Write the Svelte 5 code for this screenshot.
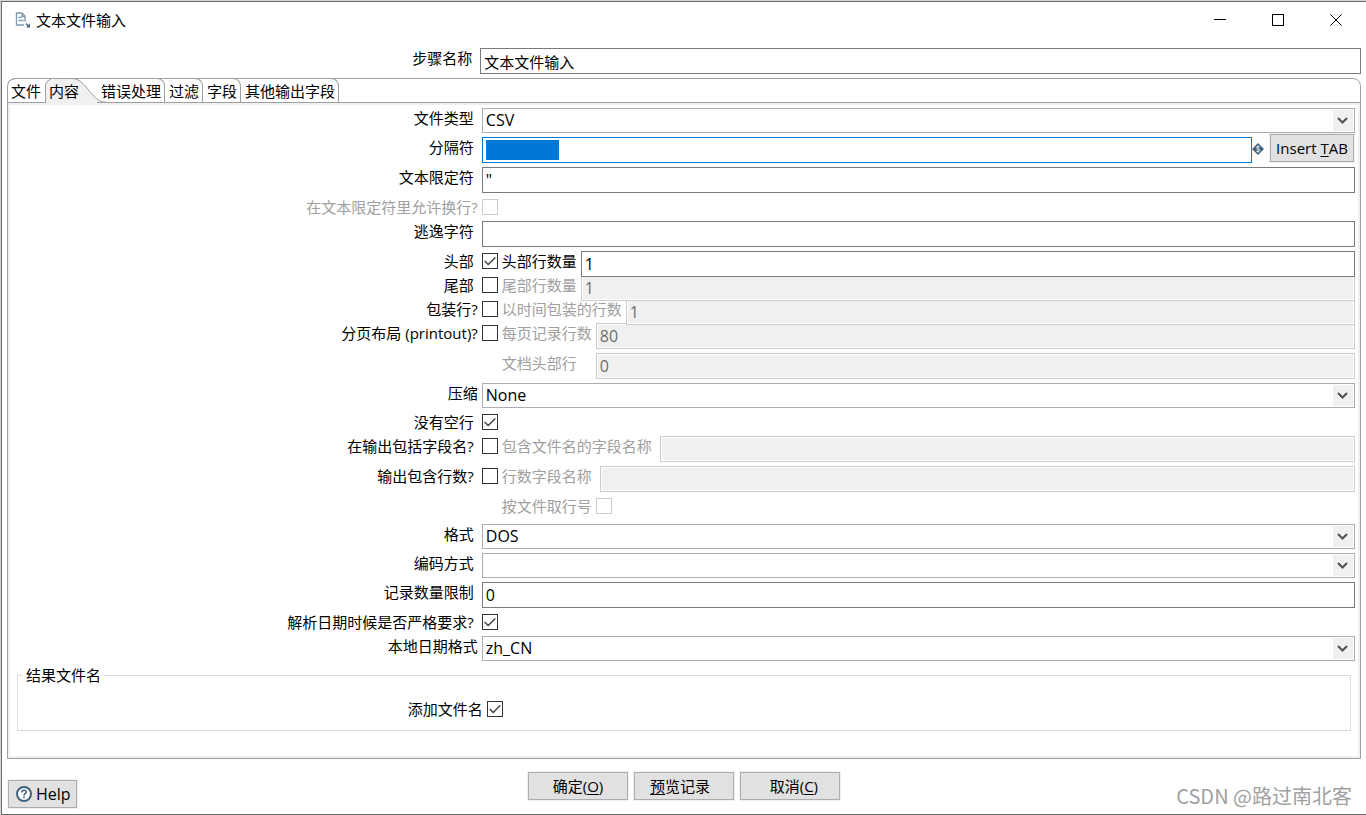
<script lang="ts">
    interface Sub {
        label: string;
        kind: "text" | "check";
        value?: string;
        enabled?: boolean;
        wide?: boolean;
        spaced?: boolean;
    }

    interface Row {
        id: string;
        label?: string;
        near?: boolean;
        kind: "select" | "text" | "check" | "separator" | "none";
        value?: string;
        checked?: boolean;
        disabled?: boolean;
        tight?: boolean;
        after?: boolean;
        sub?: Sub;
    }

    const tabs = ["文件", "内容", "错误处理", "过滤", "字段", "其他输出字段"];
    let activeTab = $state(1);

    let stepName = $state("文本文件输入");
    let addResult = $state(true);

    let rows: Row[] = $state([
        { id: "filetype", label: "文件类型", kind: "select", value: "CSV" },
        { id: "separator", label: "分隔符", kind: "separator", value: "" },
        { id: "enclosure", label: "文本限定符", kind: "text", value: '"' },
        {
            id: "breaks",
            label: "在文本限定符里允许换行?",
            near: true,
            kind: "check",
            checked: false,
            disabled: true,
        },
        { id: "escape", label: "逃逸字符", kind: "text", value: "" },
        {
            id: "header",
            label: "头部",
            kind: "check",
            checked: true,
            tight: true,
            sub: { label: "头部行数量", kind: "text", value: "1", enabled: true },
        },
        {
            id: "footer",
            label: "尾部",
            kind: "check",
            checked: false,
            tight: true,
            sub: { label: "尾部行数量", kind: "text", value: "1" },
        },
        {
            id: "wrapped",
            label: "包装行?",
            near: true,
            kind: "check",
            checked: false,
            tight: true,
            sub: { label: "以时间包装的行数", kind: "text", value: "1" },
        },
        {
            id: "paged",
            label: "分页布局 (printout)?",
            near: true,
            kind: "check",
            checked: false,
            sub: { label: "每页记录行数", kind: "text", value: "80" },
        },
        {
            id: "docheader",
            kind: "none",
            sub: { label: "文档头部行", kind: "text", value: "0", wide: true },
        },
        {
            id: "compression",
            label: "压缩",
            near: true,
            kind: "select",
            value: "None",
        },
        { id: "noempty", label: "没有空行", kind: "check", checked: true },
        {
            id: "inclfile",
            label: "在输出包括字段名?",
            kind: "check",
            checked: false,
            sub: {
                label: "包含文件名的字段名称",
                kind: "text",
                value: "",
                spaced: true,
            },
        },
        {
            id: "inclrow",
            label: "输出包含行数?",
            kind: "check",
            checked: false,
            sub: {
                label: "行数字段名称",
                kind: "text",
                value: "",
                spaced: true,
            },
        },
        {
            id: "rowbyfile",
            kind: "none",
            after: true,
            sub: { label: "按文件取行号", kind: "check" },
        },
        { id: "format", label: "格式", kind: "select", value: "DOS" },
        { id: "encoding", label: "编码方式", kind: "select", value: "" },
        { id: "limit", label: "记录数量限制", kind: "text", value: "0" },
        {
            id: "lenient",
            label: "解析日期时候是否严格要求?",
            kind: "check",
            checked: true,
        },
        {
            id: "locale",
            label: "本地日期格式",
            near: true,
            kind: "select",
            value: "zh_CN",
        },
    ]);
</script>

<div class="window">
    <header class="titlebar">
        <svg class="doc-icon" width="16" height="16" viewBox="0 0 16 16">
            <path
                d="M10 9.500V4L7 1H1.500v12H9M7 1v3.500h3M3.500 5.500h3M3.500 8.500h5"
                fill="none"
                stroke="#7f9db3"
                stroke-width="1.400"
            />
            <path d="M11 11.500l2 2" stroke="#3d6480" stroke-width="1.400" />
            <path d="M15 11.500V15.500H11z" fill="#3d6480" />
        </svg>
        <h1>{stepName}</h1>
        <button class="win-btn" aria-label="最小化">
            <svg width="12" height="12" viewBox="0 0 12 12">
                <path d="M0 5.500h12" stroke="#000" />
            </svg>
        </button>
        <button class="win-btn" aria-label="最大化">
            <svg width="12" height="12" viewBox="0 0 12 12">
                <rect x=".5" y=".5" width="11" height="11" fill="none" stroke="#000" />
            </svg>
        </button>
        <button class="win-btn" aria-label="关闭">
            <svg width="12" height="12" viewBox="0 0 12 12">
                <path d="M.3.3l11.400 11.400M11.700.3L.3 11.700" stroke="#000" />
            </svg>
        </button>
    </header>

    <div class="row step">
        <label class="label" for="step">步骤名称</label>
        <input class="text" id="step" type="text" bind:value={stepName} />
    </div>

    <main class="panel">
        <div class="tabs" role="tablist">
            {#each tabs as tab, i (tab)}
                <button
                    class="tab"
                    class:active={i === activeTab}
                    class:before={i === activeTab - 1}
                    role="tab"
                    aria-selected={i === activeTab}
                    onclick={() => (activeTab = i)}
                >
                    {#if i === activeTab}
                        <svg class="tab-shape" width="66" height="26" viewBox="0 0 66 26">
                            <path
                                d="M.5 26V7L2 3.500L6.500.5H26C37 .5 40 9 48 17C52 21.500 56 24.500 63 24.500V26Z"
                                fill="#f0f0f0"
                            />
                            <path
                                d="M.5 25V7L2 3.500L6.500.5H26C37 .5 40 9 48 17C52 21.500 56 24.500 63 24.500H66"
                                fill="none"
                                stroke="#a0a0a0"
                            />
                        </svg>
                    {/if}
                    <span>{tab}</span>
                </button>
            {/each}
            <div class="tab-rest"></div>
        </div>

        <div class="page">
            <form class="form">
                {#each rows as row, i (row.id)}
                    <div
                        class="row"
                        class:tight={row.tight}
                        class:after={row.after}
                        style:z-index={rows.length - i}
                    >
                        <label
                            class="label"
                            class:near={row.near}
                            class:off={row.disabled}
                            for={row.id}>{row.label ?? ""}</label
                        >
                        <div class="field">
                            {#if row.kind === "select"}
                                <div class="combo">
                                    <select id={row.id} bind:value={row.value}>
                                        <option value={row.value}>{row.value}</option>
                                    </select>
                                    <svg width="20" height="21" viewBox="0 0 20 21">
                                        <rect width="20" height="21" fill="#f0f0f0" />
                                        <path
                                            d="M5 8l4.500 4.500L14 8"
                                            fill="none"
                                            stroke="#505050"
                                            stroke-width="2"
                                        />
                                    </svg>
                                </div>
                            {:else if row.kind === "text"}
                                <input
                                    class="text"
                                    id={row.id}
                                    type="text"
                                    bind:value={row.value}
                                />
                            {:else if row.kind === "separator"}
                                <input
                                    class="text selected"
                                    id={row.id}
                                    type="text"
                                    bind:value={row.value}
                                />
                                <svg class="variable" width="12" height="12" viewBox="0 0 12 12">
                                    <path d="M6 0l6 6-6 6-6-6z" fill="#40627c" />
                                    <path
                                        d="M8 4.200C7.500 3.200 4.300 3 4.300 4.600C4.300 6.300 7.800 5.500 7.800 7.400C7.800 9 4.500 8.800 4 7.700M6 2.300v7.400"
                                        fill="none"
                                        stroke="#dce6ed"
                                    />
                                </svg>
                                <button type="button" class="btn insert">Insert <u>T</u>AB</button>
                            {:else if row.kind === "check"}
                                <input
                                    class="check"
                                    id={row.id}
                                    type="checkbox"
                                    disabled={row.disabled}
                                    bind:checked={row.checked}
                                />
                            {:else}
                                <span class="blank"></span>
                            {/if}

                            {#if row.sub}
                                <label
                                    class="sub"
                                    class:off={!row.sub.enabled}
                                    class:wide={row.sub.wide}
                                    class:spaced={row.sub.spaced}
                                    for="{row.id}-sub">{row.sub.label}</label
                                >
                                <input
                                    class={row.sub.kind}
                                    id="{row.id}-sub"
                                    type={row.sub.kind === "check" ? "checkbox" : "text"}
                                    value={row.sub.value}
                                    disabled={!row.sub.enabled}
                                />
                            {/if}
                        </div>
                    </div>
                {/each}
            </form>

            <fieldset>
                <legend>结果文件名</legend>
                <div class="row">
                    <label class="label near" for="result">添加文件名</label>
                    <input class="check" id="result" type="checkbox" bind:checked={addResult} />
                </div>
            </fieldset>
        </div>
    </main>

    <footer class="footer">
        <button class="btn help">
            <svg width="16" height="16" viewBox="0 0 16 16">
                <circle cx="8" cy="8" r="7" fill="#fff" stroke="#40627c" stroke-width="2" />
                <path
                    d="M5.800 6.500C5.800 3.500 10.300 3.600 10.200 6.200C10.100 7.700 8 7.700 8 9.500M8 10.500v1.700"
                    fill="none"
                    stroke="#40627c"
                    stroke-width="1.600"
                />
            </svg>
            Help
        </button>
        <div class="buttons">
            <button class="btn">确定(<u>O</u>)</button>
            <button class="btn"><u>预</u>览记录&nbsp;&nbsp;</button>
            <button class="btn">&nbsp;&nbsp;取消(<u>C</u>)</button>
        </div>
        <span class="watermark">CSDN @路过南北客</span>
    </footer>
</div>

<style>
    :global(body) {
        background: #d4d4d4;
    }

    .window {
        box-sizing: border-box;
        min-height: calc(100vh - 1px);
        margin-left: 1px;
        border: 1px solid #6b6b6b;
        border-right: 0;
        background: #fff;
        display: flex;
        flex-direction: column;
        font-family: "Open Sans", "Noto Sans CJK SC", sans-serif;
        font-size: 15px;
        line-height: 20px;
        color: #000;
    }

    :global(body):has(.window) {
        padding-top: 1px;
    }

    .window * {
        box-sizing: border-box;
    }

    button,
    input,
    select {
        font: inherit;
        color: inherit;
        margin: 0;
    }

    .titlebar {
        display: flex;
        align-items: center;
        height: 36px;
        padding: 0 1px 0 13px;
    }

    h1 {
        flex: 1;
        margin: 0 0 0 5px;
        font-size: 15px;
        font-weight: 400;
    }

    .win-btn {
        width: 58px;
        height: 36px;
        padding: 0;
        border: 0;
        background: none;
        display: grid;
        place-items: center;
    }

    .row {
        display: flex;
        align-items: flex-start;
    }

    .step {
        margin: 10px 5px 4px 4px;
    }

    .label {
        flex: none;
        width: 35%;
        padding-right: 8px;
        text-align: right;
        white-space: nowrap;
    }

    .near {
        padding-right: 4px;
    }

    .off {
        color: #a0a0a0;
    }

    .text {
        flex: 1;
        min-width: 0;
        height: 26px;
        padding: 0 3px;
        border: 1px solid #7a7a7a;
        border-radius: 0;
        background: #fff;
        outline: 0;
    }

    .text:disabled {
        border-color: #ccc;
        background: #f0f0f0;
        box-shadow: inset 0 0 0 1px #fff;
        color: #6d6d6d;
    }

    .selected {
        border-color: #0078d7;
        background: linear-gradient(#0078d7, #0078d7) no-repeat 3px 2px / 73px 20px;
    }

    .panel {
        flex: 1;
        display: flex;
        flex-direction: column;
        margin: 0 5px;
        border: 1px solid #a0a0a0;
        border-radius: 8px 8px 0 0;
    }

    .tabs {
        display: flex;
        height: 24px;
        margin-top: -1px;
    }

    .tab {
        position: relative;
        height: 25px;
        padding: 0 3px 0 4px;
        border: 1px solid #a0a0a0;
        border-left: 0;
        border-radius: 0 8px 0 0;
        background: none;
        line-height: 22px;
        white-space: nowrap;
    }

    .tab.before {
        border-right: 0;
        border-radius: 8px 0 0 0;
        padding: 0 4px 0 3px;
    }

    .tab.active {
        border: 0;
        padding: 1px 18px 1px 4px;
    }

    .tab span {
        position: relative;
    }

    .tab-shape {
        position: absolute;
        left: 0;
        top: 0;
    }

    .tab-rest {
        flex: 1;
        height: 25px;
        border-bottom: 1px solid #a0a0a0;
    }

    .page {
        flex: 1;
        margin-top: 1px;
        border: 2px solid #f0f0f0;
    }

    .form {
        display: flex;
        flex-direction: column;
        gap: 4px;
        padding-top: 3px;
    }

    .tight {
        height: 24px;
        margin-bottom: -4px;
    }

    .after {
        margin-bottom: 4px;
    }

    .field {
        flex: 1;
        min-width: 0;
        display: flex;
        align-items: flex-start;
        padding-right: 3px;
    }

    .form .label {
        height: 20px;
    }

    .form .text,
    .form select,
    .help {
        font-size: 16px;
    }

    .combo {
        flex: 1;
        display: grid;
    }

    .combo > * {
        grid-area: 1 / 1;
    }

    .combo select {
        appearance: none;
        width: 100%;
        height: 25px;
        padding: 0 24px 1px 3px;
        border: 1px solid #acacb4;
        border-radius: 0;
        background: #fff;
        outline: 0;
    }

    .combo svg {
        justify-self: end;
        align-self: center;
        margin-right: 2px;
        pointer-events: none;
    }

    .check {
        appearance: none;
        flex: none;
        width: 16px;
        height: 16px;
        margin: 2px 0;
        border: 1px solid #333;
        background: #fff;
    }

    .check:checked {
        background-image: url("data:image/svg+xml,%3Csvg xmlns='http://www.w3.org/2000/svg' width='14' height='14'%3E%3Cpath d='M1.700 7l3.500 3.500L12.300 3.500' fill='none' stroke='%23404040' stroke-width='1.400'/%3E%3C/svg%3E");
    }

    .check:disabled {
        border-color: #ccc;
    }

    .blank {
        width: 16px;
    }

    .sub {
        padding: 0 4px;
        white-space: nowrap;
    }

    .sub.wide {
        min-width: 98px;
    }

    .sub.spaced {
        padding-right: 8px;
    }

    .variable {
        flex: none;
        margin: 6px 6px 0 0;
    }

    .btn {
        height: 28px;
        padding: 0 4px;
        border: 1px solid #adadad;
        border-radius: 0;
        background: #e1e1e1;
        box-shadow: 0 0 0 1px #f0f0f0;
        white-space: nowrap;
    }

    .insert {
        width: 84px;
        margin: -3px 1px 0 0;
    }

    u {
        text-underline-offset: 2px;
    }

    fieldset {
        height: 66px;
        margin: 4px 7px 0;
        padding: 14px 0 0 4px;
        border: 1px solid #dcdcdc;
    }

    legend {
        margin-left: 1px;
        padding: 0 3px;
    }

    .footer {
        display: grid;
        grid-template-columns: 1fr auto 1fr;
        align-items: end;
        padding: 13px 6px 6px;
    }

    .help {
        justify-self: start;
        display: flex;
        align-items: center;
        gap: 4px;
        width: 69px;
        padding: 0 7px;
    }

    .help svg {
        flex: none;
    }

    .buttons {
        display: flex;
        gap: 6px;
        padding-bottom: 8px;
    }

    .buttons .btn {
        width: 100px;
    }

    .watermark {
        justify-self: end;
        padding: 0 8px 2px 0;
        font-family: "Noto Sans CJK SC", sans-serif;
        font-size: 20px;
        color: #a0a0a0;
    }
</style>
